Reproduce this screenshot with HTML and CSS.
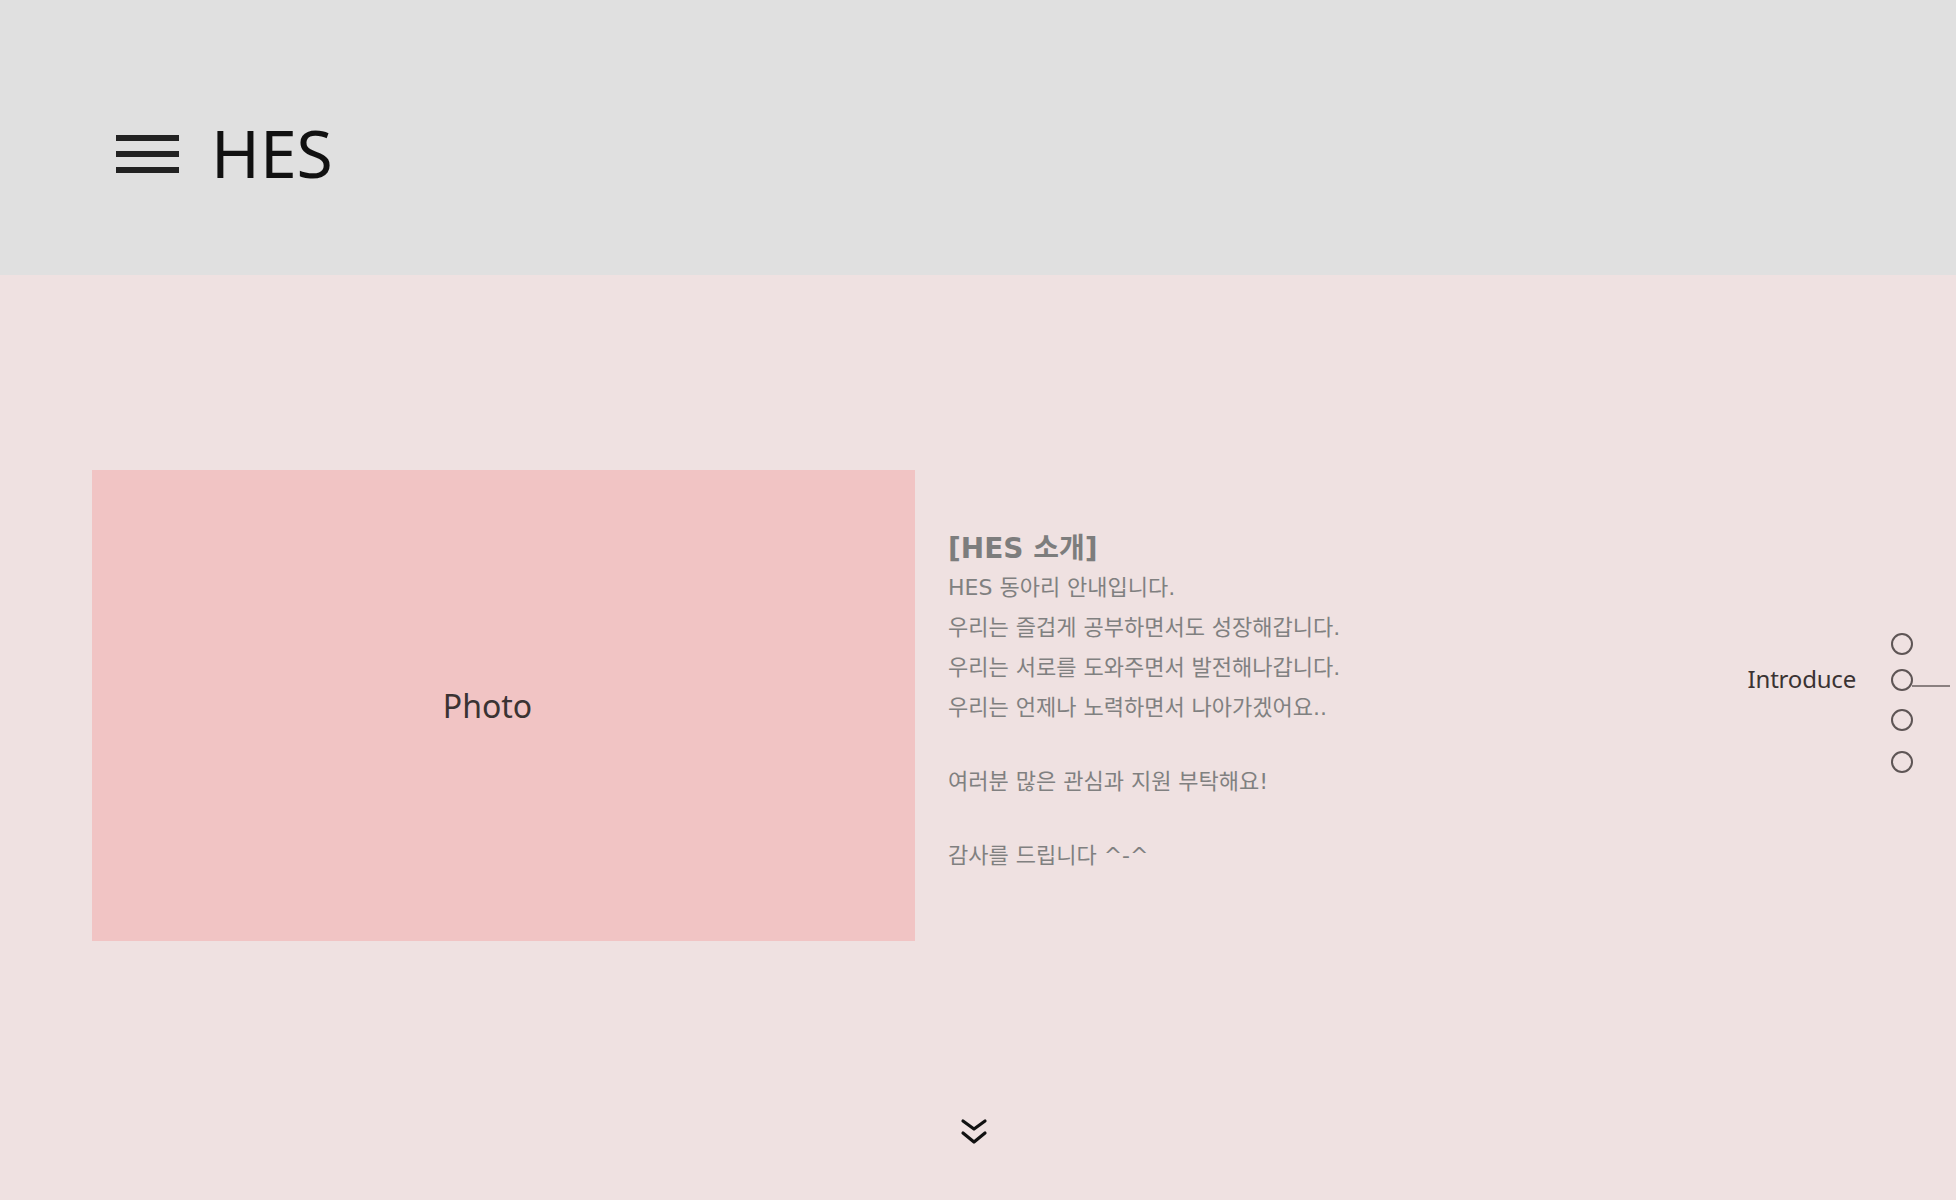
FILE: index.html
```html
<!DOCTYPE html>
<html lang="ko">
<head>
<meta charset="utf-8">
<title>HES</title>
<link rel="stylesheet" href="styles.css">
</head>
<body>
<header class="top">
  <button class="menu" aria-label="menu"><span class="bar"></span><span class="bar"></span><span class="bar"></span></button>
  <h1 class="logo">HES</h1>
</header>
<main class="intro">
  <div class="photo">Photo</div>
  <section class="desc">
    <h2 class="desc-title">[HES 소개]</h2>
    <p class="desc-text">HES 동아리 안내입니다.<br>우리는 즐겁게 공부하면서도 성장해갑니다.<br>우리는 서로를 도와주면서 발전해나갑니다.<br>우리는 언제나 노력하면서 나아가겠어요..</p>
    <p class="desc-text">여러분 많은 관심과 지원 부탁해요!</p>
    <p class="desc-text">감사를 드립니다 ^-^</p>
  </section>
  <nav class="side">
    <a class="dot"></a>
    <a class="dot active"><span class="dot-label">Introduce</span></a>
    <a class="dot"></a>
    <a class="dot"></a>
  </nav>
  <a class="down" aria-label="down">
    <svg width="28" height="30" viewBox="0 0 28 30" fill="none" stroke="#111" stroke-width="3.2" stroke-linecap="round" stroke-linejoin="round">
      <path d="M3 3 L14 11 L25 3"/>
      <path d="M3 15 L14 24 L25 15"/>
    </svg>
  </a>
</main>
</body>
</html>
```
FILE: styles.css
```css
* { box-sizing: border-box; }
html, body { margin: 0; padding: 0; }
body {
  width: 1956px;
  height: 1200px;
  overflow: hidden;
  font-family: "Noto Sans", "Noto Sans CJK KR", sans-serif;
  background: #efe1e1;
}
.top {
  height: 275px;
  background: #e0e0e0;
  display: flex;
  align-items: center;
  padding: 33px 0 0 116px;
}
.menu {
  display: flex;
  flex-direction: column;
  gap: 10px;
  padding: 0;
  border: 0;
  background: none;
}
.bar {
  display: block;
  width: 63px;
  height: 6px;
  background: #222;
}
.logo {
  margin: 0 0 4px 32px;
  font-size: 66px;
  line-height: 1;
  font-weight: 400;
  color: #111;
  letter-spacing: 0;
}
.intro {
  position: relative;
  height: 925px;
  display: flex;
  align-items: flex-start;
  padding: 195px 0 0 92px;
}
.photo {
  width: 823px;
  height: 471px;
  background: #f1c4c4;
  display: flex;
  align-items: center;
  justify-content: center;
  padding-right: 32px;
  font-size: 32px;
  color: #3a3333;
  flex-shrink: 0;
}
.desc {
  margin: 60px 0 0 33px;
  font-family: "DejaVu Sans", "Noto Sans CJK KR", sans-serif;
  color: #808080;
}
.desc-title {
  margin: 0;
  font-size: 28px;
  line-height: 38px;
  font-weight: 700;
  color: #7d7d7d;
}
.desc-text {
  margin: 34px 0 0;
  font-size: 22px;
  line-height: 40px;
}
.desc-title + .desc-text { margin-top: 0; }
.side {
  position: absolute;
  top: 358px;
  left: 1891px;
  display: flex;
  flex-direction: column;
}
.dot {
  position: relative;
  display: block;
  width: 22px;
  height: 22px;
  border: 2px solid #5e5555;
  border-radius: 50%;
}
.dot:nth-child(2) { margin-top: 14px; }
.dot:nth-child(3) { margin-top: 18px; }
.dot:nth-child(4) { margin-top: 20px; }
.dot.active::after {
  content: "";
  position: absolute;
  left: 19px;
  top: 14px;
  width: 38px;
  height: 2px;
  background: #8a8080;
}
.dot-label {
  position: absolute;
  right: 55px;
  top: 50%;
  transform: translateY(-52%);
  font-family: "Noto Sans", sans-serif;
  font-size: 24px;
  line-height: 32px;
  color: #3a3333;
  white-space: nowrap;
  letter-spacing: -0.2px;
}
.down {
  position: absolute;
  left: 960px;
  bottom: 52px;
  display: block;
  line-height: 0;
}
```
